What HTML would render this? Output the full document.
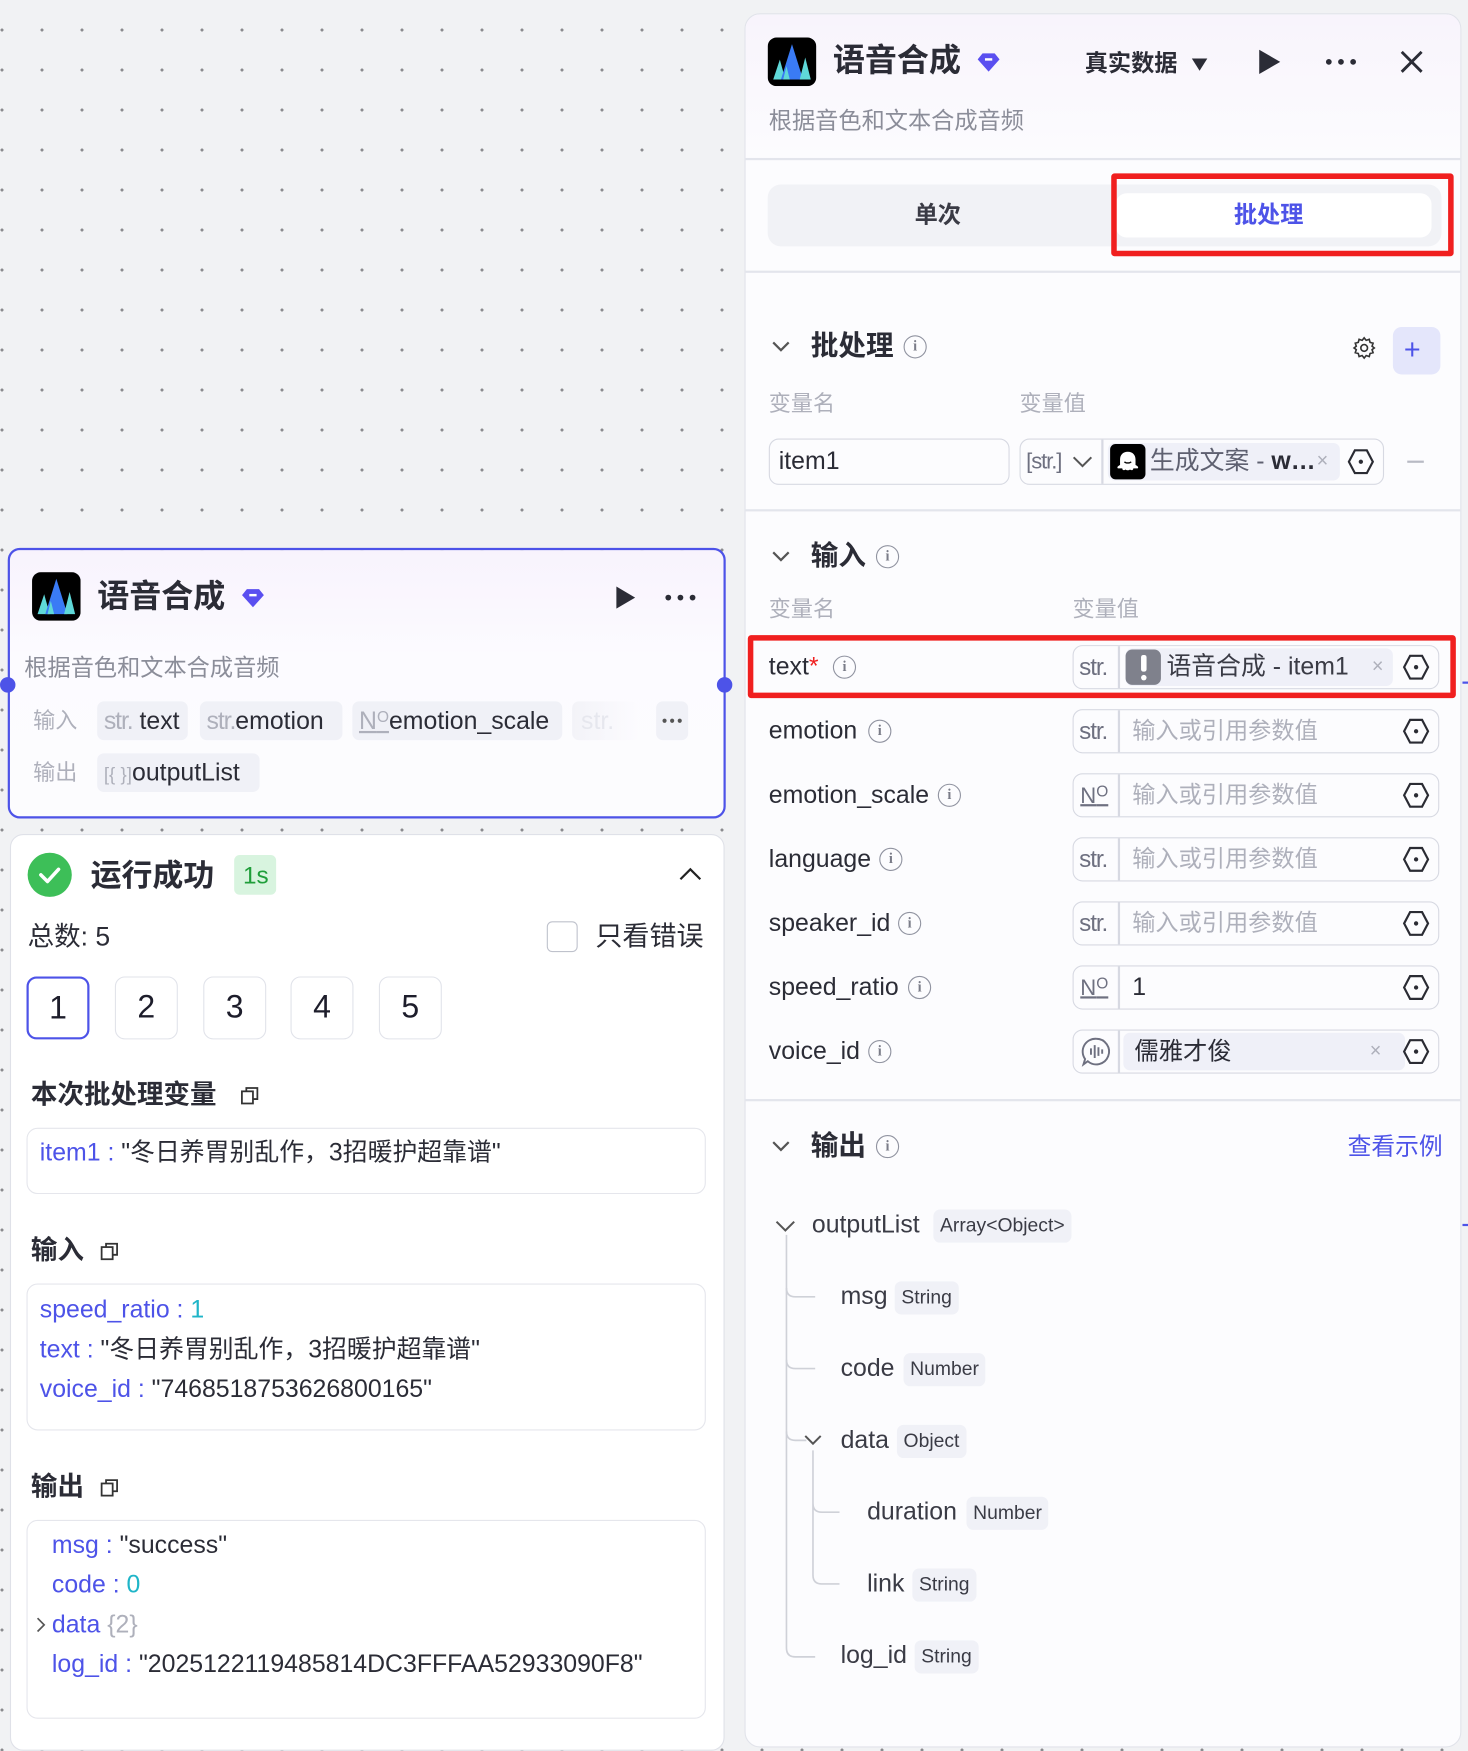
<!DOCTYPE html>
<html><head><meta charset="utf-8">
<style>
*{box-sizing:border-box;margin:0;padding:0}
html,body{width:1468px;height:1732px;overflow:hidden}
body{background-color:#f1f2f4;background-image:radial-gradient(circle at 2px 2px,#8a8a8e 1.4px,transparent 1.6px);background-size:40px 40px;background-position:0 28px;font-family:"Liberation Sans","Noto Sans CJK SC",sans-serif;color:#1d1d2b}
#w{position:absolute;left:0;top:0;width:1329px;height:1568px;transform:scale(1.10459);transform-origin:0 0}
.a{position:absolute}
.t{position:absolute;white-space:nowrap;line-height:1;transform:translateY(-50%)}
.g{color:#8b8d99}
.lg{color:#aeb0bb}
.blue{color:#4d53e8}
.cy{color:#1fb5c8}
.tag{position:absolute;background:#f0f1f7;border-radius:6px;white-space:nowrap;line-height:1}
.box{position:absolute;border:1.5px solid #d7d9e2;border-radius:9px;background:#fff}
.ib{position:absolute;border:1.6px solid #9093a0;border-radius:50%;width:21px;height:21px;font-size:13px;color:#7a7c88;text-align:center;line-height:18px;font-family:"Liberation Serif",serif;font-weight:bold;transform:translateY(-50%)}
.hr{position:absolute;height:2px;background:#e3e5ec}
.pg{position:absolute;top:884px;width:57px;height:57px;border:1.5px solid #e1e3ea;border-radius:9px;font-size:29px;text-align:center;line-height:54px;background:#fff}
.f{font-size:22.5px}
</style></head><body>
<div id="w">
<svg width="0" height="0" style="position:absolute">
<defs>
<symbol id="logo" viewBox="0 0 44 44"><rect width="44" height="44" rx="8" fill="#000"/><polygon points="5,38 11,20 16,38" fill="#5fd8d8"/><polygon points="12,38 22,6 32,38" fill="#3a7bf5"/><polygon points="29,38 34,18 39,38" fill="#5fd8d8"/><polygon points="14,38 17,26 20,38" fill="#5fd8d8"/></symbol>
<symbol id="dia" viewBox="0 0 20 20"><path d="M5 3h10l4 5-9 10-9-10z" fill="#5a4ff0"/><rect x="7" y="7" width="6" height="2" fill="#fff"/></symbol>
<symbol id="hex" viewBox="0 0 24 24"><path d="M7 2.5h10l5 9.5-5 9.5H7L2 12z" fill="none" stroke="#2a2b33" stroke-width="1.8"/><circle cx="12" cy="12" r="1.8" fill="#2a2b33"/></symbol>
<symbol id="cp" viewBox="0 0 18 18"><rect x="2" y="5" width="10" height="11" fill="none" stroke="#333" stroke-width="1.6"/><path d="M6 5V2h10v10h-4" fill="none" stroke="#333" stroke-width="1.6"/></symbol>
<symbol id="dots" viewBox="0 0 30 8"><circle cx="4" cy="4" r="2.6" fill="#2b2c36"/><circle cx="15" cy="4" r="2.6" fill="#2b2c36"/><circle cx="26" cy="4" r="2.6" fill="#2b2c36"/></symbol>
</defs></svg>

<!-- RIGHT PANEL -->
<div class="a" style="left:674px;top:12px;width:649px;height:1570px;background:#fcfcfe;border:1.5px solid #e1e3ea;border-radius:14px;overflow:hidden">
 <div class="a" style="left:0;top:0;width:100%;height:132px;background:linear-gradient(#f8f4fc,#fcfcfe)"></div>
</div>
<svg class="a" style="left:695px;top:34px" width="44" height="44"><use href="#logo"/></svg>
<div class="t" style="left:754px;top:56px;font-size:29px;font-weight:600;color:#2b2c36">语音合成</div>
<svg class="a" style="left:884px;top:45px" width="22" height="22"><use href="#dia"/></svg>
<div class="t" style="left:982px;top:58px;font-size:21px;font-weight:bold;color:#2b2c36">真实数据</div>
<svg class="a" style="left:1078px;top:52px" width="16" height="13"><path d="M1 1h14L8 12z" fill="#2b2c36"/></svg>
<svg class="a" style="left:1138px;top:44px" width="22" height="24"><path d="M2 1l19 11L2 23z" fill="#2b2c36"/></svg>
<svg class="a" style="left:1199px;top:52px" width="30" height="8"><use href="#dots"/></svg>
<svg class="a" style="left:1266px;top:44px" width="24" height="24"><path d="M3 3l18 18M21 3L3 21" stroke="#2b2c36" stroke-width="2.6"/></svg>
<div class="t g" style="left:696px;top:110px;font-size:21px">根据音色和文本合成音频</div>
<div class="hr" style="left:675px;top:143px;width:647px"></div>
<div class="a" style="left:695px;top:167px;width:610px;height:56px;background:#f1f2f6;border-radius:12px"></div>
<div class="a" style="left:1010px;top:175px;width:286px;height:40px;background:#fff;border-radius:10px"></div>
<div class="t" style="left:828px;top:195px;font-size:21px;font-weight:bold;color:#3a3b45">单次</div>
<div class="t blue" style="left:1117px;top:195px;font-size:21px;font-weight:bold">批处理</div>
<div class="a" style="left:1006px;top:157px;width:310px;height:75px;border:5px solid #f01f1f;border-radius:3px"></div>
<div class="hr" style="left:675px;top:245px;width:647px"></div>

<svg class="a" style="left:698px;top:307px" width="18" height="14"><path d="M2 3l7 7 7-7" fill="none" stroke="#555" stroke-width="2"/></svg>
<div class="t" style="left:734px;top:314px;font-size:25px;font-weight:bold;color:#2b2c36">批处理</div>
<div class="ib" style="left:818px;top:314px">i</div>
<svg class="a" style="left:1224px;top:304px" width="22" height="22" viewBox="0 0 24 24"><path d="M12 2l2 2.5 3-1 .8 3 3 .8-1 3L22 12l-2.2 1.7 1 3-3 .8-.8 3-3-1L12 22l-2-2.5-3 1-.8-3-3-.8 1-3L2 12l2.2-1.7-1-3 3-.8.8-3 3 1z" fill="none" stroke="#333" stroke-width="1.6"/><circle cx="12" cy="12" r="3.3" fill="none" stroke="#333" stroke-width="1.6"/></svg>
<div class="a" style="left:1261px;top:296px;width:43px;height:43px;background:#e4e6fb;border-radius:8px"></div>
<div class="t blue" style="left:1271px;top:316px;font-size:26px">+</div>
<div class="t lg" style="left:696px;top:366px;font-size:20px">变量名</div>
<div class="t lg" style="left:923px;top:366px;font-size:20px">变量值</div>
<div class="box" style="left:696px;top:397px;width:218px;height:42px;background:#fcfcfe"></div>
<div class="t f" style="left:705px;top:418px;color:#2b2c36">item1</div>
<div class="box" style="left:923px;top:397px;width:330px;height:42px;background:#fcfcfe"></div>
<div class="t" style="left:929px;top:418px;font-size:20px;color:#6e7080;letter-spacing:-1px">[str.]</div>
<svg class="a" style="left:970px;top:411px" width="20" height="14"><path d="M2 3l8 8 8-8" fill="none" stroke="#555" stroke-width="1.8"/></svg>
<div class="a" style="left:997px;top:398px;width:1.5px;height:40px;background:#d7d9e2"></div>
<div class="a" style="left:1003px;top:401px;width:210px;height:34px;background:#eff0f8;border-radius:6px"></div>
<div class="a" style="left:1005px;top:402px;width:32px;height:32px;background:#000;border-radius:5px"></div>
<svg class="a" style="left:1008px;top:405px" width="26" height="26" viewBox="0 0 26 26"><path d="M13 4c-4.5 0-7 3-7 7v5c-2 1-3 2-2 3h4c0 2 2 2 3 1 1 1 3 1 4 0 1 1 3 1 3-1h4c1-1 0-2-2-3v-5c0-4-2.5-7-7-7z" fill="#fff"/><path d="M10 13c1 1.5 5 1.5 6 0" stroke="#000" stroke-width="1.3" fill="none"/></svg>
<div class="t f" style="left:1041px;top:418px;color:#5e6070">生成文案 - <b style="color:#2b2c36">w…</b></div>
<div class="t lg" style="left:1192px;top:417px;font-size:18px">×</div>
<svg class="a" style="left:1219px;top:405px" width="26" height="26"><use href="#hex"/></svg>
<div class="a" style="left:1274px;top:417px;width:15px;height:1.6px;background:#b8bac4"></div>
<div class="hr" style="left:675px;top:461px;width:647px"></div>

<svg class="a" style="left:698px;top:497px" width="18" height="14"><path d="M2 3l7 7 7-7" fill="none" stroke="#555" stroke-width="2"/></svg>
<div class="t" style="left:734px;top:504px;font-size:25px;font-weight:bold;color:#2b2c36">输入</div>
<div class="ib" style="left:793px;top:504px">i</div>
<div class="t lg" style="left:696px;top:552px;font-size:20px">变量名</div>
<div class="t lg" style="left:971px;top:552px;font-size:20px">变量值</div>

<div class="box" style="left:971px;top:584px;width:332px;height:40px;background:#fcfcfe"></div>
<div class="box" style="left:971px;top:642px;width:332px;height:40px;background:#fcfcfe"></div>
<div class="box" style="left:971px;top:700px;width:332px;height:40px;background:#fcfcfe"></div>
<div class="box" style="left:971px;top:758px;width:332px;height:40px;background:#fcfcfe"></div>
<div class="box" style="left:971px;top:816px;width:332px;height:40px;background:#fcfcfe"></div>
<div class="box" style="left:971px;top:874px;width:332px;height:40px;background:#fcfcfe"></div>
<div class="box" style="left:971px;top:932px;width:332px;height:40px;background:#fcfcfe"></div>
<div class="a" style="left:1012px;top:585px;width:1.5px;height:38px;background:#d7d9e2"></div>
<div class="a" style="left:1012px;top:643px;width:1.5px;height:38px;background:#d7d9e2"></div>
<div class="a" style="left:1012px;top:701px;width:1.5px;height:38px;background:#d7d9e2"></div>
<div class="a" style="left:1012px;top:759px;width:1.5px;height:38px;background:#d7d9e2"></div>
<div class="a" style="left:1012px;top:817px;width:1.5px;height:38px;background:#d7d9e2"></div>
<div class="a" style="left:1012px;top:875px;width:1.5px;height:38px;background:#d7d9e2"></div>
<div class="a" style="left:1012px;top:933px;width:1.5px;height:38px;background:#d7d9e2"></div>

<div class="t f" style="left:696px;top:604px;color:#2b2c36">text<span style="color:#f02020">*</span></div><div class="ib" style="left:754px;top:604px">i</div>
<div class="t f" style="left:696px;top:662px;color:#2b2c36">emotion</div><div class="ib" style="left:786px;top:662px">i</div>
<div class="t f" style="left:696px;top:720px;color:#2b2c36">emotion_scale</div><div class="ib" style="left:849px;top:720px">i</div>
<div class="t f" style="left:696px;top:778px;color:#2b2c36">language</div><div class="ib" style="left:796px;top:778px">i</div>
<div class="t f" style="left:696px;top:836px;color:#2b2c36">speaker_id</div><div class="ib" style="left:813px;top:836px">i</div>
<div class="t f" style="left:696px;top:894px;color:#2b2c36">speed_ratio</div><div class="ib" style="left:822px;top:894px">i</div>
<div class="t f" style="left:696px;top:952px;color:#2b2c36">voice_id</div><div class="ib" style="left:786px;top:952px">i</div>

<div class="t" style="left:977px;top:604px;font-size:22px;color:#6e7080;letter-spacing:-1px">str.</div>
<div class="t" style="left:977px;top:662px;font-size:22px;color:#6e7080;letter-spacing:-1px">str.</div>
<div class="t" style="left:978px;top:720px;font-size:20px;color:#6e7080;text-decoration:underline">N<span style="font-size:14px;vertical-align:6px">O</span></div>
<div class="t" style="left:977px;top:778px;font-size:22px;color:#6e7080;letter-spacing:-1px">str.</div>
<div class="t" style="left:977px;top:836px;font-size:22px;color:#6e7080;letter-spacing:-1px">str.</div>
<div class="t" style="left:978px;top:894px;font-size:20px;color:#6e7080;text-decoration:underline">N<span style="font-size:14px;vertical-align:6px">O</span></div>
<svg class="a" style="left:978px;top:937px" width="29" height="30" viewBox="0 0 30 30"><path d="M15 3a12 12 0 1 1-8 21l-4 3 1.5-5A12 12 0 0 1 15 3z" fill="none" stroke="#6e7080" stroke-width="1.8"/><path d="M10 12v6M13.5 9v12M17 11v8M20.5 13v4" stroke="#6e7080" stroke-width="1.8"/></svg>

<div class="a" style="left:1019px;top:587px;width:242px;height:34px;background:#eff0f8;border-radius:6px"></div>
<div class="a" style="left:1019px;top:588px;width:32px;height:32px;background:#7f818c;border-radius:6px"></div>
<div class="a" style="left:1033px;top:593px;width:5px;height:15px;background:#fff;border-radius:2px"></div>
<div class="a" style="left:1033px;top:611px;width:5px;height:5px;background:#fff;border-radius:50%"></div>
<div class="t f" style="left:1056px;top:604px;color:#3a3b45">语音合成 - item1</div>
<div class="t lg" style="left:1242px;top:603px;font-size:18px">×</div>

<div class="t lg" style="left:1025px;top:662px;font-size:21px">输入或引用参数值</div>
<div class="t lg" style="left:1025px;top:720px;font-size:21px">输入或引用参数值</div>
<div class="t lg" style="left:1025px;top:778px;font-size:21px">输入或引用参数值</div>
<div class="t lg" style="left:1025px;top:836px;font-size:21px">输入或引用参数值</div>
<div class="t f" style="left:1025px;top:894px;color:#2b2c36">1</div>
<div class="a" style="left:1017px;top:935px;width:255px;height:34px;background:#eff0f8;border-radius:6px"></div>
<div class="t" style="left:1027px;top:952px;font-size:22px;color:#2b2c36">儒雅才俊</div>
<div class="t lg" style="left:1240px;top:951px;font-size:18px">×</div>

<svg class="a" style="left:1269px;top:591px" width="26" height="26"><use href="#hex"/></svg>
<svg class="a" style="left:1269px;top:649px" width="26" height="26"><use href="#hex"/></svg>
<svg class="a" style="left:1269px;top:707px" width="26" height="26"><use href="#hex"/></svg>
<svg class="a" style="left:1269px;top:765px" width="26" height="26"><use href="#hex"/></svg>
<svg class="a" style="left:1269px;top:823px" width="26" height="26"><use href="#hex"/></svg>
<svg class="a" style="left:1269px;top:881px" width="26" height="26"><use href="#hex"/></svg>
<svg class="a" style="left:1269px;top:939px" width="26" height="26"><use href="#hex"/></svg>
<div class="a" style="left:677px;top:575px;width:641px;height:57px;border:5px solid #f01f1f;border-radius:3px"></div>
<div class="a" style="left:1324px;top:617px;width:5px;height:2px;background:#4d53e8"></div>
<div class="a" style="left:1324px;top:1108px;width:5px;height:2px;background:#4d53e8"></div>
<div class="hr" style="left:675px;top:995px;width:647px"></div>

<svg class="a" style="left:698px;top:1031px" width="18" height="14"><path d="M2 3l7 7 7-7" fill="none" stroke="#555" stroke-width="2"/></svg>
<div class="t" style="left:734px;top:1038px;font-size:25px;font-weight:bold;color:#2b2c36">输出</div>
<div class="ib" style="left:793px;top:1038px">i</div>
<div class="t blue" style="left:1220px;top:1039px;font-size:21.5px">查看示例</div>

<svg class="a" style="left:700px;top:1100px" width="90" height="410"><g fill="none" stroke="#cfd1d8" stroke-width="1.5"><path d="M3 6l8 8 8-8" stroke="#555" stroke-width="1.8"/><path d="M12 18V392q0 8 8 8h18"/><path d="M12 66q0 8 8 8h18M12 131q0 8 8 8h18M12 196q0 8 8 8h10"/><path d="M29 200l7 7 7-7" stroke="#555" stroke-width="1.8"/><path d="M36 213V326q0 8 8 8h16M36 261q0 8 8 8h16"/></g></svg>
<div class="t f" style="left:735px;top:1109px;color:#3a3b45">outputList</div>
<div class="tag" style="left:845px;top:1095px;padding:6px 6px;font-size:17.5px;color:#3a3b45">Array&lt;Object&gt;</div>
<div class="t f" style="left:761px;top:1174px;color:#3a3b45">msg</div>
<div class="tag" style="left:810px;top:1160px;padding:6px 6px;font-size:17.5px;color:#3a3b45">String</div>
<div class="t f" style="left:761px;top:1239px;color:#3a3b45">code</div>
<div class="tag" style="left:818px;top:1225px;padding:6px 6px;font-size:17.5px;color:#3a3b45">Number</div>
<div class="t f" style="left:761px;top:1304px;color:#3a3b45">data</div>
<div class="tag" style="left:812px;top:1290px;padding:6px 6px;font-size:17.5px;color:#3a3b45">Object</div>
<div class="t f" style="left:785px;top:1369px;color:#3a3b45">duration</div>
<div class="tag" style="left:875px;top:1355px;padding:6px 6px;font-size:17.5px;color:#3a3b45">Number</div>
<div class="t f" style="left:785px;top:1434px;color:#3a3b45">link</div>
<div class="tag" style="left:826px;top:1420px;padding:6px 6px;font-size:17.5px;color:#3a3b45">String</div>
<div class="t f" style="left:761px;top:1499px;color:#3a3b45">log_id</div>
<div class="tag" style="left:828px;top:1485px;padding:6px 6px;font-size:17.5px;color:#3a3b45">String</div>

<!-- LEFT NODE -->
<div class="a" style="left:7px;top:496px;width:650px;height:245px;border:2px solid #4d53e8;border-radius:11px;background:linear-gradient(#f8f3fd,#fcfbff 40%,#fcfcfe)"></div>
<div class="a" style="left:0px;top:613px;width:14px;height:14px;border-radius:50%;background:#4d53e8"></div>
<div class="a" style="left:649px;top:613px;width:14px;height:14px;border-radius:50%;background:#4d53e8"></div>
<svg class="a" style="left:29px;top:518px" width="44" height="44"><use href="#logo"/></svg>
<div class="t" style="left:88px;top:541px;font-size:29px;font-weight:600;color:#2b2c36">语音合成</div>
<svg class="a" style="left:218px;top:530px" width="22" height="22"><use href="#dia"/></svg>
<svg class="a" style="left:556px;top:530px" width="20" height="22"><path d="M2 1l17 10L2 21z" fill="#2b2c36"/></svg>
<svg class="a" style="left:601px;top:537px" width="30" height="8"><use href="#dots"/></svg>
<div class="t g" style="left:22px;top:605px;font-size:21px">根据音色和文本合成音频</div>
<div class="t lg" style="left:30px;top:653px;font-size:20px">输入</div>
<div class="tag" style="left:88px;top:635px;width:82px;height:35px"></div>
<div class="t f" style="left:94px;top:653px;color:#2b2c36"><span class="lg" style="letter-spacing:-1px">str.</span> text</div>
<div class="tag" style="left:181px;top:635px;width:129px;height:35px"></div>
<div class="t f" style="left:187px;top:653px;color:#2b2c36"><span class="lg" style="letter-spacing:-1px">str.</span>emotion</div>
<div class="tag" style="left:319px;top:635px;width:190px;height:35px"></div>
<div class="t f" style="left:325px;top:653px;color:#2b2c36"><span class="lg" style="text-decoration:underline">N<span style="font-size:14px;vertical-align:6px">O</span></span>emotion_scale</div>
<div class="tag" style="left:518px;top:635px;width:60px;height:35px;background:linear-gradient(90deg,#f3f3f8,rgba(243,243,248,0))"></div>
<div class="t f" style="left:526px;top:653px;color:#e6e7ee">str.</div>
<div class="tag" style="left:594px;top:635px;width:29px;height:35px"></div>
<svg class="a" style="left:599px;top:650px" width="19" height="5" viewBox="0 0 30 8"><circle cx="4" cy="4" r="3" fill="#555"/><circle cx="15" cy="4" r="3" fill="#555"/><circle cx="26" cy="4" r="3" fill="#555"/></svg>
<div class="t lg" style="left:30px;top:700px;font-size:20px">输出</div>
<div class="tag" style="left:88px;top:682px;width:147px;height:35px"></div>
<div class="t f" style="left:94px;top:700px;color:#2b2c36"><span class="lg" style="font-size:17px">[{ }]</span>outputList</div>

<!-- RESULT CARD -->
<div class="a" style="left:9px;top:755px;width:647px;height:830px;background:#fff;border:1.5px solid #dfe1e8;border-radius:12px"></div>
<div class="a" style="left:25px;top:772px;width:40px;height:40px;border-radius:50%;background:#3dbf58"></div>
<svg class="a" style="left:33px;top:781px" width="24" height="22"><path d="M4 11l6 6 10-11" fill="none" stroke="#fff" stroke-width="3.2" stroke-linecap="round" stroke-linejoin="round"/></svg>
<div class="t" style="left:82px;top:793px;font-size:28px;font-weight:600;color:#2b2c36">运行成功</div>
<div class="a" style="left:212px;top:774px;width:38px;height:36px;background:#d8f4df;border-radius:5px"></div>
<div class="t" style="left:220px;top:793px;font-size:22px;color:#1f9e3a">1s</div>
<svg class="a" style="left:614px;top:784px" width="22" height="14"><path d="M2 12l9-9 9 9" fill="none" stroke="#222" stroke-width="2"/></svg>
<div class="t" style="left:25px;top:849px;font-size:24px;color:#2b2c36">总数: 5</div>
<div class="a" style="left:495px;top:834px;width:28px;height:28px;border:1.5px solid #bfc2cc;border-radius:5px"></div>
<div class="t" style="left:539px;top:849px;font-size:24.5px;color:#2b2c36">只看错误</div>
<div class="pg" style="left:24px;border:2px solid #4d53e8">1</div>
<div class="pg" style="left:104px">2</div>
<div class="pg" style="left:184px">3</div>
<div class="pg" style="left:263px">4</div>
<div class="pg" style="left:343px">5</div>

<div class="t" style="left:28px;top:992px;font-size:24px;font-weight:600;color:#2b2c36">本次批处理变量</div>
<svg class="a" style="left:217px;top:983px" width="18" height="18"><use href="#cp"/></svg>
<div class="a" style="left:24px;top:1021px;width:615px;height:60px;border:1.5px solid #e5e6ec;border-radius:10px"></div>
<div class="t f" style="left:36px;top:1044px;color:#2b2c36"><span class="blue">item1 :</span> "冬日养胃别乱作，3招暖护超靠谱"</div>

<div class="t" style="left:28px;top:1133px;font-size:24px;font-weight:600;color:#2b2c36">输入</div>
<svg class="a" style="left:90px;top:1124px" width="18" height="18"><use href="#cp"/></svg>
<div class="a" style="left:24px;top:1162px;width:615px;height:133px;border:1.5px solid #e5e6ec;border-radius:10px"></div>
<div class="t f" style="left:36px;top:1186px"><span class="blue">speed_ratio :</span> <span class="cy">1</span></div>
<div class="t f" style="left:36px;top:1222px;color:#2b2c36"><span class="blue">text :</span> "冬日养胃别乱作，3招暖护超靠谱"</div>
<div class="t f" style="left:36px;top:1258px;color:#2b2c36"><span class="blue">voice_id :</span> "7468518753626800165"</div>

<div class="t" style="left:28px;top:1347px;font-size:24px;font-weight:600;color:#2b2c36">输出</div>
<svg class="a" style="left:90px;top:1338px" width="18" height="18"><use href="#cp"/></svg>
<div class="a" style="left:24px;top:1376px;width:615px;height:180px;border:1.5px solid #e5e6ec;border-radius:10px"></div>
<div class="t f" style="left:47px;top:1399px;color:#2b2c36"><span class="blue">msg :</span> "success"</div>
<div class="t f" style="left:47px;top:1435px"><span class="blue">code :</span> <span class="cy">0</span></div>
<svg class="a" style="left:32px;top:1463px" width="10" height="16"><path d="M2 2l6 6-6 6" fill="none" stroke="#555" stroke-width="1.5"/></svg>
<div class="t f" style="left:47px;top:1471px"><span class="blue">data</span> <span class="lg">{2}</span></div>
<div class="t f" style="left:47px;top:1507px;color:#2b2c36"><span class="blue">log_id :</span> "2025122119485814DC3FFFAA52933090F8"</div>
</div>
</body></html>
